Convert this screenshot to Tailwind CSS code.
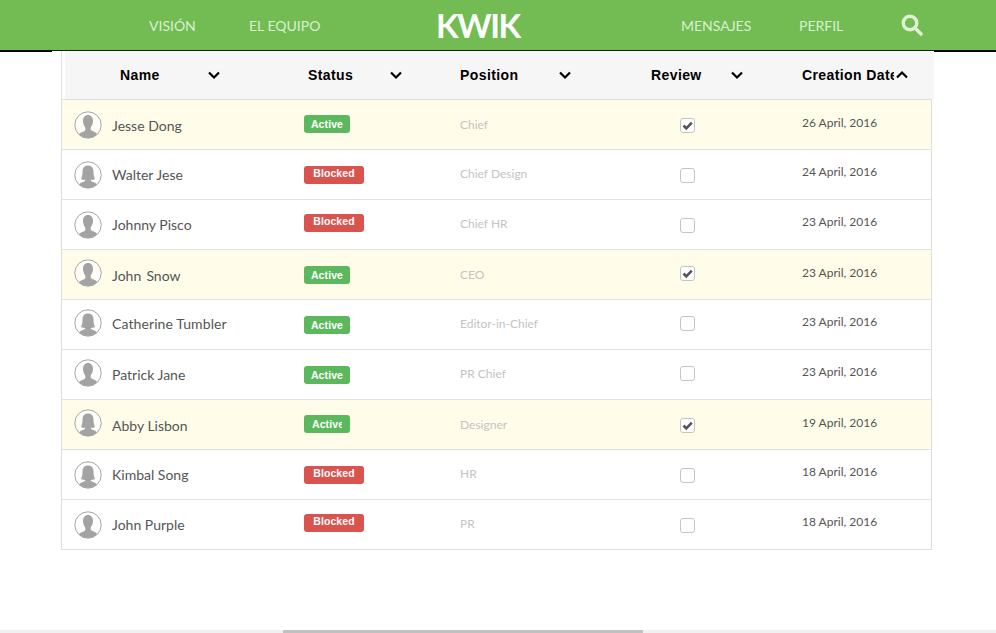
<!DOCTYPE html>
<html>
<head>
<meta charset="utf-8">
<script src="https://cdn.jsdelivr.net/npm/@tailwindcss/browser@4"></script>
</head>
<body class="bg-white overflow-hidden font-['Lato',sans-serif]">
<svg class="hidden"><defs>
<symbol id="m" viewBox="0 0 28 28"><circle cx="14" cy="14" r="13.200" fill="#fff" fill-opacity=".6" stroke="#a6a6a6" stroke-width="1"/><path d="M14 4c3.200 0 5 2.500 5 5.800 0 2.700-1 5-2.300 6.400v2.300c0 .8 1.200 1.200 3 1.900 1.500.6 2.800 1.300 3.400 2.600A13 13 0 0 1 14 27a13 13 0 0 1-9.100-3.500c.6-1.300 1.900-2 3.400-2.600 1.800-.7 3-1.100 3-1.900v-2.300C10 14.800 9 12.500 9 9.800 9 6.500 10.800 4 14 4z" fill="#a3a3a3"/></symbol>
<symbol id="f" viewBox="0 0 28 28"><circle cx="14" cy="14" r="13.200" fill="#fff" fill-opacity=".6" stroke="#a6a6a6" stroke-width="1"/><path d="M14 4.500c3.600 0 5.500 2.600 5.500 5.800 0 3.500.5 6.200 1.500 7.700-1.200.6-2.800 1-4.200 1.100v.6c.4.600 1.800 1 3.200 1.600 1.400.6 2.400 1.300 3 2.300A13 13 0 0 1 14 27a13 13 0 0 1-9-3.400c.6-1 1.600-1.700 3-2.300 1.400-.6 2.800-1 3.200-1.600v-.6C9.800 19 8.200 18.600 7 18c1-1.500 1.500-4.200 1.500-7.700C8.500 7.100 10.400 4.500 14 4.500z" fill="#a3a3a3"/></symbol>
<symbol id="d" viewBox="0 0 14 10"><path d="M2 2.500l5 5 5-5" fill="none" stroke="#000" stroke-width="2.200"/></symbol>
<symbol id="u" viewBox="0 0 14 10"><path d="M2 7.500l5-5 5 5" fill="none" stroke="#000" stroke-width="2.200"/></symbol>
</defs></svg>

<div class="h-[633px] relative overflow-hidden">
  <header class="relative h-[51px] bg-[#72bc53] border-b border-[#1a1a1a] text-[#d9f0cf] text-[14px]">
    <div class="absolute left-0 top-[50px] w-[52px] h-[2px] bg-black"></div>
    <div class="absolute right-0 top-[50px] w-[62px] h-[2px] bg-black"></div>
    <nav class="flex items-center h-[50px] pl-[149px]">
      <a class="w-[100px] mt-[1px]">VISIÓN</a>
      <a class="w-[187px] mt-[1px]">EL EQUIPO</a>
      <a class="w-[245px] text-white text-[33px] tracking-[-1.500px] font-bold leading-none">KWIK</a>
      <a class="w-[118px]">MENSAJES</a>
      <a class="w-[102px] mt-[1px]">PERFIL</a>
      <svg class="w-[22px] h-[22px]" viewBox="0 0 22 22" fill="none" stroke="#dff2d7" stroke-width="3.400"><circle cx="9" cy="9" r="6.800"/><path d="M14 14l6 6" stroke-linecap="round"/></svg>
    </nav>
  </header>

  <main class="ml-[61px] w-[871px]">
    <div class="border-l border-[#e2e2e2] pl-[3px] w-[873px]">
    <div class="w-[869px] h-[48px] bg-[#f6f6f6] flex items-center font-['Liberation_Sans',sans-serif] font-bold text-[14px] tracking-[0.4px] text-black">
      <div class="w-[243px] pl-[55px] flex items-center"><span class="w-[87px]">Name</span><svg class="w-[14px] h-[10px]"><use href="#d"/></svg></div>
      <div class="w-[152px] flex items-center"><span class="w-[81px]">Status</span><svg class="w-[14px] h-[10px]"><use href="#d"/></svg></div>
      <div class="w-[191px] flex items-center"><span class="w-[98px]">Position</span><svg class="w-[14px] h-[10px]"><use href="#d"/></svg></div>
      <div class="w-[151px] flex items-center"><span class="w-[79px]">Review</span><svg class="w-[14px] h-[10px]"><use href="#d"/></svg></div>
      <div class="flex items-center"><span class="w-[92px] overflow-hidden whitespace-nowrap">Creation Date</span><svg class="w-[14px] h-[10px] ml-[1px]"><use href="#u"/></svg></div>
    </div>
    </div>

    <div class="border border-[#dedede] text-[#555]">
      <div class="h-[50px] border-b border-[#e2e2e2] bg-[#fffde9] flex items-center">
        <div class="w-[242px] flex items-center pl-[12px]"><svg class="w-[28px] h-[28px]"><use href="#m"/></svg><span class="ml-[10px] text-[14px] mt-[2px]">Jesse Dong</span></div>
        <div class="w-[156px]"><span class="block w-[46px] h-[18px] -mt-[2px] rounded-[3px] bg-[#5cb85c] text-white text-[10.500px] tracking-[0.1px] font-bold font-['Liberation_Sans',sans-serif] leading-[18px] text-center">Active</span></div>
        <div class="w-[220px] text-[12px] text-[#c4c4c4]">Chief</div>
        <div class="w-[122px]"><svg class="w-[15px] h-[15px] mt-[2px]" viewBox="0 0 15 15"><rect x=".5" y=".5" width="14" height="14" rx="2.500" fill="#fff" stroke="#c4c4c4"/><path d="M3.500 7.500l2.800 2.800 5.500-5.600" fill="none" stroke="#555" stroke-width="2.600"/></svg></div>
        <div class="text-[12px] -mt-[4px]">26 April, 2016</div>
      </div>
      <div class="h-[50px] border-b border-[#e2e2e2] flex items-center">
        <div class="w-[242px] flex items-center pl-[12px]"><svg class="w-[28px] h-[28px]"><use href="#f"/></svg><span class="ml-[10px] text-[14px] -mt-[1px]">Walter Jese</span></div>
        <div class="w-[156px]"><span class="block w-[60px] h-[18px] rounded-[3px] bg-[#d9534f] text-white text-[10.500px] tracking-[0.1px] font-bold font-['Liberation_Sans',sans-serif] leading-[15px] text-center">Blocked</span></div>
        <div class="w-[220px] text-[12px] text-[#c4c4c4] -mt-[2px]">Chief Design</div>
        <div class="w-[122px]"><svg class="w-[15px] h-[15px] mt-[2px]" viewBox="0 0 15 15"><rect x=".5" y=".5" width="14" height="14" rx="2.500" fill="#fff" stroke="#c4c4c4"/></svg></div>
        <div class="text-[12px] -mt-[6px]">24 April, 2016</div>
      </div>
      <div class="h-[50px] border-b border-[#e2e2e2] flex items-center">
        <div class="w-[242px] flex items-center pl-[12px]"><svg class="w-[28px] h-[28px]"><use href="#m"/></svg><span class="ml-[10px] text-[14px] -mt-[1px]">Johnny Pisco</span></div>
        <div class="w-[156px]"><span class="block w-[60px] h-[18px] -mt-[4px] rounded-[3px] bg-[#d9534f] text-white text-[10.500px] tracking-[0.1px] font-bold font-['Liberation_Sans',sans-serif] leading-[15px] text-center">Blocked</span></div>
        <div class="w-[220px] text-[12px] text-[#c4c4c4] -mt-[2px]">Chief HR</div>
        <div class="w-[122px]"><svg class="w-[15px] h-[15px] mt-[2px]" viewBox="0 0 15 15"><rect x=".5" y=".5" width="14" height="14" rx="2.500" fill="#fff" stroke="#c4c4c4"/></svg></div>
        <div class="text-[12px] -mt-[6px]">23 April, 2016</div>
      </div>
      <div class="h-[50px] border-b border-[#e2e2e2] bg-[#fffde9] flex items-center">
        <div class="w-[242px] flex items-center pl-[12px]"><svg class="w-[28px] h-[28px] -mt-[4px]"><use href="#m"/></svg><span class="ml-[10px] text-[14px] whitespace-pre mt-[1px] [word-spacing:-1px]">John  Snow</span></div>
        <div class="w-[156px]"><span class="block w-[46px] h-[18px] rounded-[3px] bg-[#5cb85c] text-white text-[10.500px] tracking-[0.1px] font-bold font-['Liberation_Sans',sans-serif] leading-[18px] text-center">Active</span></div>
        <div class="w-[220px] text-[12px] text-[#c4c4c4]">CEO</div>
        <div class="w-[122px]"><svg class="w-[15px] h-[15px] -mt-[3px]" viewBox="0 0 15 15"><rect x=".5" y=".5" width="14" height="14" rx="2.500" fill="#fff" stroke="#c4c4c4"/><path d="M3.500 7.500l2.800 2.800 5.500-5.600" fill="none" stroke="#555" stroke-width="2.600"/></svg></div>
        <div class="text-[12px] -mt-[4px]">23 April, 2016</div>
      </div>
      <div class="h-[50px] border-b border-[#e2e2e2] flex items-center">
        <div class="w-[242px] flex items-center pl-[12px]"><svg class="w-[28px] h-[28px] -mt-[4px]"><use href="#f"/></svg><span class="ml-[10px] text-[14px] -mt-[3px] tracking-[0.1px]">Catherine Tumbler</span></div>
        <div class="w-[156px]"><span class="block w-[46px] h-[18px] rounded-[3px] bg-[#5cb85c] text-white text-[10.500px] tracking-[0.1px] font-bold font-['Liberation_Sans',sans-serif] leading-[18px] text-center">Active</span></div>
        <div class="w-[220px] text-[12px] text-[#c4c4c4] -mt-[2px]">Editor-in-Chief</div>
        <div class="w-[122px]"><svg class="w-[15px] h-[15px] -mt-[3px]" viewBox="0 0 15 15"><rect x=".5" y=".5" width="14" height="14" rx="2.500" fill="#fff" stroke="#c4c4c4"/></svg></div>
        <div class="text-[12px] -mt-[6px]">23 April, 2016</div>
      </div>
      <div class="h-[50px] border-b border-[#e2e2e2] flex items-center">
        <div class="w-[242px] flex items-center pl-[12px]"><svg class="w-[28px] h-[28px] -mt-[4px]"><use href="#m"/></svg><span class="ml-[10px] text-[14px] -mt-[1px]">Patrick Jane</span></div>
        <div class="w-[156px]"><span class="block w-[46px] h-[18px] rounded-[3px] bg-[#5cb85c] text-white text-[10.500px] tracking-[0.1px] font-bold font-['Liberation_Sans',sans-serif] leading-[18px] text-center">Active</span></div>
        <div class="w-[220px] text-[12px] text-[#c4c4c4] -mt-[2px]">PR Chief</div>
        <div class="w-[122px]"><svg class="w-[15px] h-[15px] -mt-[2px]" viewBox="0 0 15 15"><rect x=".5" y=".5" width="14" height="14" rx="2.500" fill="#fff" stroke="#c4c4c4"/></svg></div>
        <div class="text-[12px] -mt-[6px]">23 April, 2016</div>
      </div>
      <div class="h-[50px] border-b border-[#e2e2e2] bg-[#fffde9] flex items-center">
        <div class="w-[242px] flex items-center pl-[12px]"><svg class="w-[28px] h-[28px] -mt-[4px]"><use href="#f"/></svg><span class="ml-[10px] text-[14px] mt-[2px]">Abby Lisbon</span></div>
        <div class="w-[156px]"><span class="block w-[46px] h-[18px] -mt-[2px] rounded-[3px] bg-[#5cb85c] text-white text-[10.500px] tracking-[0.1px] font-bold font-['Liberation_Sans',sans-serif] leading-[18px] pl-[8px] overflow-hidden whitespace-nowrap"><span class="block w-[30px] overflow-hidden">Active</span></span></div>
        <div class="w-[220px] text-[12px] text-[#c4c4c4]">Designer</div>
        <div class="w-[122px]"><svg class="w-[15px] h-[15px] mt-[1px]" viewBox="0 0 15 15"><rect x=".5" y=".5" width="14" height="14" rx="2.500" fill="#fff" stroke="#c4c4c4"/><path d="M3.500 7.500l2.800 2.800 5.500-5.600" fill="none" stroke="#555" stroke-width="2.600"/></svg></div>
        <div class="text-[12px] -mt-[3px]">19 April, 2016</div>
      </div>
      <div class="h-[50px] border-b border-[#e2e2e2] flex items-center">
        <div class="w-[242px] flex items-center pl-[12px]"><svg class="w-[28px] h-[28px]"><use href="#f"/></svg><span class="ml-[10px] text-[14px] -mt-[1px]">Kimbal Song</span></div>
        <div class="w-[156px]"><span class="block w-[60px] h-[18px] rounded-[3px] bg-[#d9534f] text-white text-[10.500px] tracking-[0.1px] font-bold font-['Liberation_Sans',sans-serif] leading-[15px] text-center">Blocked</span></div>
        <div class="w-[220px] text-[12px] text-[#c4c4c4] -mt-[2px]">HR</div>
        <div class="w-[122px]"><svg class="w-[15px] h-[15px] mt-[1px]" viewBox="0 0 15 15"><rect x=".5" y=".5" width="14" height="14" rx="2.500" fill="#fff" stroke="#c4c4c4"/></svg></div>
        <div class="text-[12px] -mt-[6px]">18 April, 2016</div>
      </div>
      <div class="h-[49px] flex items-center">
        <div class="w-[242px] flex items-center pl-[12px]"><svg class="w-[28px] h-[28px]"><use href="#m"/></svg><span class="ml-[10px] text-[14px] -mt-[1px]">John Purple</span></div>
        <div class="w-[156px]"><span class="block w-[60px] h-[18px] -mt-[4px] rounded-[3px] bg-[#d9534f] text-white text-[10.500px] tracking-[0.1px] font-bold font-['Liberation_Sans',sans-serif] leading-[15px] text-center">Blocked</span></div>
        <div class="w-[220px] text-[12px] text-[#c4c4c4] -mt-[2px]">PR</div>
        <div class="w-[122px]"><svg class="w-[15px] h-[15px] mt-[1px]" viewBox="0 0 15 15"><rect x=".5" y=".5" width="14" height="14" rx="2.500" fill="#fff" stroke="#c4c4c4"/></svg></div>
        <div class="text-[12px] -mt-[6px]">18 April, 2016</div>
      </div>
    </div>
  </main>

  <div class="absolute left-0 right-0 bottom-0 h-[3px] bg-[#f1f1f1]"><div class="ml-[283px] w-[360px] h-[3px] bg-[#c1c1c1]"></div></div>
</div>
</body>
</html>
